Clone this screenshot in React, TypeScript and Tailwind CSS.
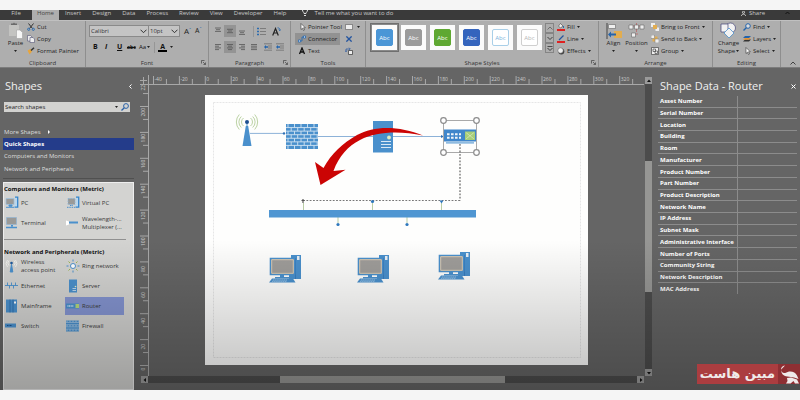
import React from "react";

const tabs = ["Insert", "Design", "Data", "Process", "Review", "View", "Developer", "Help"];

const fields = [
  "Asset Number", "Serial Number", "Location", "Building", "Room", "Manufacturer",
  "Product Number", "Part Number", "Product Description", "Network Name", "IP Address",
  "Subnet Mask", "Administrative Interface", "Number of Ports", "Community String",
  "Network Description", "MAC Address",
];

const styles = [
  "bg-[#4b96d6] border-[#4b96d6] text-white",
  "bg-[#9b9b9b] border-[#9b9b9b] text-white",
  "bg-[#5fa832] border-[#5fa832] text-white",
  "bg-[#3464bd] border-[#3464bd] text-white",
  "bg-white border-[#a9cfe8] text-[#79b2dc]",
  "bg-white border-[#cfcfcf] text-[#b5b5b5]",
];

function Caret() {
  return (
    <svg className="h-[2px] w-[3px] shrink-0" viewBox="0 0 3 2">
      <path d="M0 0h3L1.500 2z" fill="#222" />
    </svg>
  );
}

function Group({ label, className, launcher, children }: {
  label: string; className: string; launcher?: boolean; children: React.ReactNode;
}) {
  return (
    <section aria-label={label} className={"flex flex-col border-r border-[#8e8e8e] " + className}>
      <div className="flex h-[38px]">{children}</div>
      <div className="relative text-center text-[6px] leading-[8px] text-[#333]">
        {label}
        {launcher && (
          <svg className="absolute right-[2px] top-[1px] size-[5px]" viewBox="0 0 5 5" fill="none" stroke="#444" strokeWidth=".7">
            <path d="M.5 3.500v-3h3M2 2l2.300 2.300M4.500 2.500v2h-2" />
          </svg>
        )}
      </div>
    </section>
  );
}

function Tool({ icon, label, caret, active }: {
  icon: React.ReactNode; label: string; caret?: boolean; active?: boolean;
}) {
  return (
    <button className={"flex h-[12px] items-center gap-[2px] whitespace-nowrap pl-[3px] pr-[3px] text-[6px] leading-[12px] " + (active ? "bg-[#929292]" : "")}>
      <svg className="size-[8px] shrink-0" viewBox="0 0 8 8">{icon}</svg>
      {label}
      {caret && <Caret />}
    </button>
  );
}

function Combo({ label, value, className }: { label: string; value: string; className: string }) {
  return (
    <div className={"relative h-[12px] border border-[#8a8a8a] bg-[#c4c4c4] " + className}>
      <select aria-label={label} className="block h-[10px] w-full appearance-none bg-transparent pl-[1px] text-[6px] leading-[10px] text-[#333]">
        <option>{value}</option>
      </select>
      <svg className="pointer-events-none absolute right-[1px] top-[3px] h-[5px] w-[7px]" viewBox="0 0 7 5" fill="none" stroke="#333">
        <path d="M.5 .7l3 3 3-3" />
      </svg>
    </div>
  );
}

function Lines({ widths, align, active, label, top = 1.5 }: {
  widths: number[]; align: "l" | "c" | "r"; active?: boolean; label: string; top?: number;
}) {
  return (
    <button aria-label={label} className={"flex h-[12px] w-[12px] items-center justify-center " + (active ? "bg-[#949494]" : "")}>
      <svg className="size-[8px]" viewBox="0 0 8 8" stroke="#555" strokeWidth=".8">
        {widths.map((w, i) => {
          const x = align === "l" ? 1 : align === "r" ? 7 - w : 4 - w / 2;
          return <path key={i} d={`M${x} ${top + i * 1.7}h${w}`} />;
        })}
      </svg>
    </button>
  );
}

function Ribbon() {
  return (
    <div className="flex h-[48px] border-b border-[#7c7c7c] border-t border-t-[#c0c0c0] bg-[#aeaeae] text-[#222]">
      <Group label="Clipboard" className="w-[86px]">
        <button className="ml-[7px] flex w-[17px] flex-col items-center text-[6px] leading-[8px]">
          <svg className="mt-[1px] h-[17px] w-[15px]" viewBox="0 0 15 17">
            <path d="M1 3h10v11H1z" fill="#c3c3c1" />
            <path d="M3 3V1.500h2L6 .5l1 1h2V3z" fill="#6a6a6a" />
            <path d="M8.500 8h3.500l2.500 2.500v6h-6z" fill="#f6f6f6" stroke="#999" strokeWidth=".5" />
          </svg>
          Paste
          <span className="mt-[3px] flex"><Caret /></span>
        </button>
        <div className="flex flex-col">
          <Tool label="Cut" icon={<g fill="none" stroke="#333"><path d="M1.500 .5l4 5M6.500 .5l-4 5" /><circle cx="1.700" cy="6.300" r="1.100" stroke="#2c6cb0" /><circle cx="6.300" cy="6.300" r="1.100" stroke="#2c6cb0" /></g>} />
          <Tool label="Copy" icon={<g fill="#eee" stroke="#557" strokeWidth=".6"><path d="M.5 .5h3l1.500 1.500v4h-4.500z" /><path d="M3 2.500h3l1.500 1.500v3.500H3z" /></g>} />
          <Tool label="Format Painter" icon={<><path d="M.5 3.500l3-1.500 1.500 2.500-2.500 3z" fill="#e9a63c" /><path d="M4 3.500L7 .7" stroke="#333" strokeWidth="1.500" /></>} />
        </div>
      </Group>

      <Group label="Font" className="w-[123px]" launcher>
        <div className="flex flex-col pl-[3px] pt-[4px]">
          <div className="flex items-center">
            <Combo label="Font name" value="Calibri" className="w-[60px]" />
            <Combo label="Font size" value="10pt" className="w-[31px] border-l-0" />
            <button aria-label="Grow font" className="ml-[4px] text-[8px] leading-[10px]">A<sup className="text-[5px] text-[#2c6cb0]">ˆ</sup></button>
            <button aria-label="Shrink font" className="ml-[4px] text-[7px] leading-[10px]">A<sup className="text-[5px] text-[#2c6cb0]">ˇ</sup></button>
          </div>
          <div className="mt-[4px] flex h-[12px] items-center pl-[4px] text-[7px] leading-[12px] text-[#111]">
            <button className="w-[12px] text-left font-bold">B</button>
            <button className="w-[12px] text-left font-bold italic">I</button>
            <button className="w-[10px] text-left font-bold underline">U</button>
            <button className="w-[12px] text-left text-[5px] font-bold line-through">abc</button>
            <button className="flex items-center gap-[1px] text-[6px]">Aa<Caret /></button>
            <span className="ml-[4px] h-[11px] border-l border-[#969696]" />
            <button className="ml-[3px] flex items-center gap-[3px]">
              <span className="h-[9px] w-[9px] border-b-2 border-black text-center font-bold leading-[7px]">A</span>
              <Caret />
            </button>
          </div>
        </div>
      </Group>

      <Group label="Paragraph" className="w-[82px]" launcher>
        <div className="flex flex-col gap-[4px] pl-[3px] pt-[4px]">
          <div className="flex items-center">
            <Lines label="Align top" widths={[6, 4, 6]} align="c" top={1} />
            <Lines label="Align middle" widths={[6, 4, 6]} align="c" top={2.3} active />
            <Lines label="Align bottom" widths={[6, 4, 6]} align="c" top={4} />
            <span className="ml-[5px] h-[11px] border-l border-[#969696]" />
            <button aria-label="Bullets" className="ml-[3px]">
              <svg className="size-[9px]" viewBox="0 0 9 9"><path d="M0 1.500h2M0 4.500h2M0 7.500h2" stroke="#2c6cb0" strokeWidth="1.500" /><path d="M3 1.500h6M3 4.500h6M3 7.500h6" stroke="#666" strokeWidth=".7" /></svg>
            </button>
            <button aria-label="Rotate text" className="ml-[6px]">
              <svg className="size-[9px]" viewBox="0 0 9 9" fill="none"><path d="M.7 8.500L3.500 1.500l2.800 7M1.800 6h3.400" stroke="#222" strokeWidth="1.200" /><path d="M5.500 .8c2 0 2.500 1 2.300 2.700M6.600 2.500l1.200 1.200L8.800 2.500" stroke="#2c6cb0" strokeWidth=".9" /></svg>
            </button>
          </div>
          <div className="flex items-center">
            <Lines label="Align left" widths={[6, 4, 6, 4]} align="l" />
            <Lines label="Center" widths={[6, 4, 6, 4]} align="c" active />
            <Lines label="Align right" widths={[6, 4, 6, 4]} align="r" />
            <Lines label="Justify" widths={[6, 6, 6, 6]} align="l" />
            {["Decrease indent", "Increase indent"].map((n) => (
              <button key={n} aria-label={n} className="ml-[4px]">
                <svg className="size-[8px]" viewBox="0 0 8 8"><path d="M0 .8h8M4 3h4M4 5h4M0 7.200h8" stroke="#666" strokeWidth=".7" /><path d="M0 4l2-2v1.300h2v1.400H2V6z" fill="#2464ac" /></svg>
              </button>
            ))}
          </div>
        </div>
      </Group>

      <Group label="Tools" className="w-[75px]">
        <div className="flex flex-col items-start pl-[4px]">
          <Tool label="Pointer Tool" icon={<path d="M3 .5v6l1.500-1.300 1 2.300 1-.5-1-2.200h1.800z" fill="#fff" stroke="#333" strokeWidth=".6" />} />
          <Tool active label="Connector" icon={<g fill="none" stroke="#2c6cb0" strokeWidth=".9"><path d="M1.500 6h2.500V2h2.500" /><path d="M.4 5h2v2h-2zM5.500 1h2v2h-2z" fill="#fff" /></g>} />
          <Tool label="Text" icon={<path d="M1.500 7L4 1l2.500 6M2.500 5h3" fill="none" stroke="#111" strokeWidth="1.300" />} />
        </div>
        <div className="flex flex-col">
          <button aria-label="Rectangle" className="flex h-[12px] items-center gap-[4px]"><span className="h-[6px] w-[8px] border border-[#888] bg-[#eee]" /><Caret /></button>
          <button aria-label="Connection point" className="flex h-[12px] items-center pl-[1px]"><svg className="size-[6px]" viewBox="0 0 5 5"><path d="M.3 .3l4.400 4.400M4.700 .3L.3 4.700" stroke="#2455a0" strokeWidth="1.100" /></svg></button>
          <button aria-label="Text block" className="flex h-[12px] items-center"><svg className="size-[8px]" viewBox="0 0 8 8" fill="none" stroke="#333" strokeWidth=".7"><path d="M3.500 3.500h4v4h-4z" fill="#eee" /><path d="M1 4.500V2h4M4 .7L5.300 2 4 3.200M0 3.500l1 1.300 1-1.300" stroke="#2455a0" /></svg></button>
        </div>
      </Group>

      <Group label="Shape Styles" className="min-w-[232px] flex-1" launcher>
        <div className="flex pl-[4px] pt-[2px]">
          <div className="flex h-[29px] items-center">
            {styles.map((s, i) => (
              <button key={i} className={"flex h-[29px] w-[29px] items-center justify-center border " + (i === 0 ? "border-[#6f6f6f] bg-[#8a8a8a]" : "border-transparent")}>
                <span className="flex h-[25px] w-[25px] items-center justify-center bg-[#fbfbfb]">
                  <span className={"flex h-[17px] w-[17px] items-center justify-center rounded-[2px] border text-[6px] leading-[6px] " + s}>Abc</span>
                </span>
              </button>
            ))}
          </div>
          <div className="ml-[1px] flex flex-col">
            {["Previous styles", "Next styles", "More styles"].map((n, i) => (
              <button key={n} aria-label={n} className="flex h-[10px] w-[9px] items-center justify-center border border-[#858585]">
                <svg className="h-[5px] w-[6px]" viewBox="0 0 6 5" fill="none" stroke={i === 0 ? "#666" : "#333"} strokeWidth=".9">
                  <path d={i === 0 ? "M.5 3.500L3 1l2.500 2.500" : i === 1 ? "M.5 1L3 3.500 5.500 1" : "M.5 2L3 4.500 5.500 2M.5 .4h5"} />
                </svg>
              </button>
            ))}
          </div>
        </div>
        <div className="flex flex-col">
          <Tool caret label="Fill" icon={<><path d="M1.500 3l2-2.500 2.500 2.500-2.500 2z" fill="#eee" stroke="#444" strokeWidth=".6" /><path d="M6.500 3v2" stroke="#2c6cb0" /><path d="M0 7h8" stroke="#e02020" strokeWidth="2" /></>} />
          <Tool caret label="Line" icon={<><path d="M2 5L6.500 .5" stroke="#2455a0" strokeWidth="1.200" /><path d="M0 7h8" stroke="#e02020" strokeWidth="2" /></>} />
          <Tool caret label="Effects" icon={<><circle cx="4.300" cy="4.500" r="3" fill="#444" /><circle cx="3.500" cy="3.500" r="2.700" fill="#eee" stroke="#555" strokeWidth=".5" /></>} />
        </div>
      </Group>

      <Group label="Arrange" className="w-[114px]">
        <button className="ml-[6px] flex w-[17px] flex-col items-center text-[6px] leading-[8px]">
          <svg className="mt-[1px] h-[17px] w-[16px]" viewBox="0 0 16 17">
            <path d="M1 1v16" stroke="#444" /><path d="M2.500 2.500h7v4h-7z" fill="#eee" stroke="#666" strokeWidth=".6" />
            <path d="M8 9h8v7H8z" fill="#e2ad50" /><path d="M2 12.500l3-3v2h5v2H5v2z" fill="#2464ac" />
          </svg>
          Align
          <span className="mt-[3px] flex"><Caret /></span>
        </button>
        <button className="ml-[3px] flex w-[23px] flex-col items-center text-[6px] leading-[8px]">
          <svg className="mt-[1px] h-[17px] w-[17px]" viewBox="0 0 17 17" fill="#eee" stroke="#666" strokeWidth=".6">
            <path d="M8.500 1v9M5 4h7M5 12h5" stroke="#c05050" /><path d="M1 3h4v4H1zM6.500 3h4v4h-4zM12 3h4v4h-4zM3.500 11h4v4h-4z" />
          </svg>
          Position
          <span className="mt-[3px] flex"><Caret /></span>
        </button>
        <div className="flex flex-col items-start">
          <Tool caret label="Bring to Front" icon={<><path d="M0 0h4v4H0zM4.500 4.500H8V8H4.500z" fill="#eee" /><path d="M2 2h4v4H2z" fill="#e2ad50" /></>} />
          <Tool caret label="Send to Back" icon={<><path d="M1.500 1.500h5v5h-5z" fill="#e2ad50" /><path d="M0 0h3.500v3.500H0zM4 4h4v4H4z" fill="#eee" stroke="#777" strokeWidth=".5" /></>} />
          <Tool caret label="Group" icon={<g fill="#eee" stroke="#333" strokeWidth=".6"><path d="M.5 .5h7v7h-7z" /><path d="M2 2h2.500v2.500H2zM4 4h2.500v2.500H4z" /></g>} />
        </div>
      </Group>

      <Group label="Editing" className="w-[68px]">
        <button className="ml-[4px] flex w-[23px] flex-col items-center text-[6px] leading-[8px]">
          <svg className="mt-[1px] h-[17px] w-[17px] shrink-0" viewBox="0 0 17 17" fill="#f2f2f2" stroke="#447" strokeWidth=".7">
            <circle cx="10.500" cy="6" r="5" /><path d="M1 2h7v8H1z" /><path d="M9 6l5 5-5 5-5-5z" stroke="#3b86c8" />
          </svg>
          <span>Change</span>
          <span className="flex items-center gap-[1px]">Shape<Caret /></span>
        </button>
        <div className="flex flex-col items-start">
          <Tool caret label="Find" icon={<g fill="none" stroke="#2464ac"><circle cx="5" cy="3" r="2.300" fill="#ddd" /><path d="M3.300 4.700L.5 7.500" strokeWidth="1.400" /></g>} />
          <Tool caret label="Layers" icon={<><path d="M0 6.500l2-2h6l-2 2z" fill="#333" /><path d="M0 4.700l2-2h6l-2 2z" fill="#e2963c" /><path d="M0 3l2-2h6L6 3z" fill="#2464ac" /></>} />
          <Tool caret label="Select" icon={<path d="M3 .5v6l1.500-1.300 1 2.300 1-.5-1-2.200h1.800z" fill="#fff" stroke="#333" strokeWidth=".6" />} />
        </div>
      </Group>
      <button aria-label="Collapse ribbon" className="flex w-[19px] items-end justify-center pb-[2px] pl-[5px]">
        <svg className="h-[4px] w-[6px]" viewBox="0 0 6 4" fill="none" stroke="#333" strokeWidth=".9"><path d="M.5 3.500L3 1l2.500 2.500" /></svg>
      </button>
    </div>
  );
}

const blue = "#4a90cc";

const icons: Record<string, React.ReactNode> = {
  pc: <><path d="M10 .7h2.700v10H9.500" fill="#b9d7ee" stroke="#3585cc" strokeWidth="1.300" /><path d="M1 2h8v6H1z" fill="#9a9a98" stroke="#9cc3e2" strokeWidth=".7" /><path d="M4 8.500h3v1.200H4zM1 10.800h8" fill={blue} stroke={blue} strokeWidth="1" /></>,
  vpc: <><path d="M10 .7h2.700v10H9.500" fill="#b9d7ee" stroke="#3585cc" strokeWidth="1.300" /><path d="M2 2h7v6H2z" fill="#9a9a98" stroke="#8ab4d8" strokeWidth=".8" strokeDasharray="1.500 1" /><path d="M4 9h3M1 10.800h8" stroke={blue} strokeDasharray="1.500 .8" /></>,
  terminal: <><path d="M1.500 1h10v7h-10z" fill="#9a9a98" stroke="#8ab4d8" strokeWidth=".6" /><path d="M6 8.500h2V10H6zM1 10.200h11v1.500H1z" fill={blue} /></>,
  mux: <><path d="M0 4l3 1v3L0 9z" fill="#fff" /><path d="M3 6h9" stroke={blue} strokeWidth="2" /></>,
  wireless: <><path d="M5.200 12.500L6.500 5l1.300 7.500z" fill={blue} stroke={blue} /><circle cx="6.500" cy="3.500" r="1.300" fill="#1f5a9c" /><path d="M4 6a3.500 3.500 0 010-5M9 6a3.500 3.500 0 000-5M2.500 7.500a5.500 5.500 0 010-7M10.500 7.500a5.500 5.500 0 000-7" fill="none" stroke="#f3f3ee" strokeWidth=".9" /></>,
  ring: <><circle cx="7" cy="6.500" r="2.500" fill="#fff" stroke={blue} /><path d="M7 0v2M7 11v2M.5 6.500h2M11.500 6.500h2" stroke={blue} /><path d="M2.500 2l1.500 1.500M11.500 2L10 3.500M2.500 11L4 9.500M11.500 11L10 9.500" stroke="#9db850" /></>,
  ethernet: <path d="M0 6h13M2.500 3v3M6.500 3v3M10.500 3v3M4.500 6v3M8.500 6v3" stroke={blue} strokeWidth=".9" />,
  server: <><path d="M3 0h8v13H3z" fill={blue} /><path d="M6.500 9h3.500M6.500 11h3.500" stroke="#dbe8f4" strokeWidth=".8" /><circle cx="9.500" cy="7" r=".8" fill="#e6f0c0" /></>,
  mainframe: <><path d="M1 0h11v13H1z" fill={blue} /><path d="M5 0v13M8 0v13" stroke="#2765a0" strokeWidth=".7" /><path d="M9 2h2v2H9z" fill="#fff" /></>,
  router: <><path d="M0 4h9v5H0zM9 4h4v5H9z" fill={blue} /><path d="M1.500 6.500h6" stroke="#dce9f6" strokeWidth="1.500" strokeDasharray="1 .6" /><path d="M9.500 4.500H13v4H9.500z" fill="#b5d77c" /></>,
  switch: <><path d="M0 4h11v4H0z" fill={blue} /><path d="M2 6h5" stroke="#1c4f8a" strokeWidth="1.200" strokeDasharray="1 .5" /></>,
  firewall: <><path d="M0 1h13v11H0z" fill={blue} /><path d="M0 3h13M0 5.200h13M0 7.400h13M0 9.600h13" stroke="#b9d2e8" strokeWidth=".6" /><path d="M1 1v11M4 1v11M7 1v11M10 1v11M13 1v11" stroke="#b9d2e8" strokeWidth=".8" strokeDasharray="1.600 2.800" /></>,
};

function Stencil({ icon, children, active }: { icon: string; children: React.ReactNode; active?: boolean }) {
  return (
    <button className={"flex h-[18px] items-center gap-[2px] whitespace-nowrap px-[1px] text-left text-[6px] leading-[8px] " + (active ? "bg-[#8494d0]" : "")}>
      <svg className="size-[14px] shrink-0" viewBox="0 0 14 13">{icons[icon]}</svg>
      <span>{children}</span>
    </button>
  );
}

function ShapesPanel() {
  return (
    <aside className="flex w-[136px] shrink-0 flex-col pl-[3px] pr-[2px]">
      <header className="flex items-center justify-between pl-[2px] pr-[2px] pt-[10px]">
        <h2 className="text-[11px] leading-[16px] text-[#f0f0f0]">Shapes</h2>
        <button aria-label="Collapse shapes" className="text-white">
          <svg className="h-[5px] w-[3px]" viewBox="0 0 3 5"><path d="M2.500 .5l-2 2 2 2" fill="none" stroke="#fff" /></svg>
        </button>
      </header>
      <label className="ml-[1px] mr-[4px] mt-[8px] flex h-[10px] items-center gap-[3px] bg-[#d2d2d0] pr-[1px]">
        <input aria-label="Search shapes" placeholder="Search shapes" className="min-w-0 flex-1 bg-transparent pl-[1px] text-[6px] leading-[10px] outline-none placeholder:text-[#222]" />
        <Caret />
        <svg className="size-[8px]" viewBox="0 0 8 8" fill="none" stroke="#2b62a8"><circle cx="5" cy="3" r="2.400" /><path d="M3.300 4.700L.5 7.500" strokeWidth="1.300" /></svg>
      </label>
      <nav className="mt-[14px] flex flex-col text-[6px] text-[#dedede]">
        <a href="#more" className="flex h-[12px] items-center gap-[7px] pl-[1px]">More Shapes
          <svg className="h-[4px] w-[2px]" viewBox="0 0 2 4"><path d="M0 0l2 2-2 2z" fill="#fff" /></svg>
        </a>
        <a href="#quick" className="flex h-[12px] items-center bg-[#243c8a] pl-[1px] font-bold text-white">Quick Shapes</a>
        <a href="#computers" className="flex h-[13px] items-center pl-[1px]">Computers and Monitors</a>
        <a href="#network" className="flex h-[12px] items-center pl-[1px]">Network and Peripherals</a>
      </nav>
      <div className="mt-[3px] border-t border-[#505050]" />
      <div className="mt-[3px] flex-1 border border-[#eee] bg-[#d3d3d1] text-[#3a3a3a]">
        <h3 className="pt-[1px] text-[6px] font-bold leading-[10px] text-[#111]">Computers and Monitors (Metric)</h3>
        <div className="mr-[8px] grid grid-cols-[61px_59px] gap-y-[2px]">
          <Stencil icon="pc">PC</Stencil>
          <Stencil icon="vpc">Virtual PC</Stencil>
          <Stencil icon="terminal">Terminal</Stencil>
          <Stencil icon="mux">Wavelength-...<br />Multiplexer (...</Stencil>
        </div>
        <div className="mr-[7px] mt-[7px] border-t border-[#909090]" />
        <h3 className="pt-[7px] text-[6px] font-bold leading-[10px] text-[#111]">Network and Peripherals (Metric)</h3>
        <div className="mr-[8px] grid grid-cols-[61px_59px] gap-y-[2px]">
          <Stencil icon="wireless">Wireless<br />access point</Stencil>
          <Stencil icon="ring">Ring network</Stencil>
          <Stencil icon="ethernet">Ethernet</Stencil>
          <Stencil icon="server">Server</Stencil>
          <Stencil icon="mainframe">Mainframe</Stencil>
          <Stencil icon="router" active>Router</Stencil>
          <Stencil icon="switch">Switch</Stencil>
          <Stencil icon="firewall">Firewall</Stencil>
        </div>
      </div>
    </aside>
  );
}

const STEP = 25.9;

function TopRuler() {
  return (
    <svg className="block h-[10px] w-full" fill="#ccc" stroke="none">
      <path d="M0 9.500h2000" stroke="#a8a8a8" />
      {Array.from({ length: 19 }, (_, i) => {
        const x = 4.500 + i * STEP;
        return (
          <g key={i}>
            <path d={`M${x} 1v8M${x + STEP / 2} 4v5`} stroke="#a8a8a8" />
            <text x={x + 1} y="6" fontSize="5">{(i - 2) * 20}</text>
          </g>
        );
      })}
    </svg>
  );
}

function SideRuler() {
  return (
    <svg className="block h-full w-[10px]" fill="#ccc">
      <path d="M9.500 0v2000" stroke="#a8a8a8" />
      {Array.from({ length: 12 }, (_, i) => {
        const y = 280.500 - i * STEP;
        return (
          <g key={i}>
            <path d={`M1 ${y}h8M4 ${y + STEP / 2 - STEP}h5`} stroke="#a8a8a8" />
            <text transform={`translate(6 ${i === 0 ? y + 5 : y + 10}) rotate(-90)`} fontSize="5">{i * 20}</text>
          </g>
        );
      })}
    </svg>
  );
}

function Workstation({ x, y }: { x: number; y: number }) {
  return (
    <g transform={`translate(${x} ${y})`}>
      <path d="M22 0h10v24H20V3h2z" fill={blue} />
      <path d="M26.500 3v21" stroke="#2f73b4" strokeWidth=".7" />
      <path d="M28 1h2.500v4H28z" fill="#e8eef4" />
      <path d="M1.500 3.500h24v16h-24z" fill="#9f9d9a" stroke={blue} strokeWidth="1.600" />
      <path d="M2.700 4.700h21.600v13.600H2.700z" fill="none" stroke="#d8cbb5" />
      <path d="M11 20h4v2h-4zM6 22h14v1.500H6z" fill={blue} />
      <path d="M3 23.500h21l2.500 4H0z" fill={blue} />
      <path d="M4 25h14M3 26.300h15" stroke="#c8dff2" strokeWidth=".6" strokeDasharray="1.500 .6" />
    </g>
  );
}

function Diagram() {
  const rows = [0, 1, 2, 3, 4, 5, 6];
  return (
    <svg className="block w-full" viewBox="205 95 383 270" fill="none">
      <rect x="213.500" y="102.500" width="367" height="255" stroke="#e6e6e6" strokeDasharray="2 1" />
      <path d="M245.800 126h2.400l3.300 20h-9z" fill={blue} />
      <path d="M247 122v5" stroke={blue} />
      <circle cx="247" cy="122" r="2" fill="#1d4f8f" />
      <path d="M243.500 126a5 5 0 010-8M250.500 126a5 5 0 000-8M241.300 127.500a7.500 7.500 0 010-11M252.700 127.500a7.500 7.500 0 000-11M239.300 129.500a11 11 0 010-15M254.700 129.500a11 11 0 000-15" stroke="#bcd3a4" />
      <path d="M250 133.400h35M318 136.500h55M393 136.500h51" stroke="#8db2d8" />
      <circle cx="284" cy="133.400" r="1.200" fill="#2f6fb4" />
      <path d="M441 135l3 1.500-3 1.500z" fill="#2f6fb4" />
      <rect x="286" y="124" width="32" height="25" fill={blue} />
      {rows.map((r) => (
        <g key={r} stroke="#d3e4f3" strokeWidth=".9">
          {r > 0 && <path d={`M286 ${124 + r * 3.57}h32`} />}
          {[0, 1, 2, 3, 4].map((c) => {
            const x = 288 + c * 6.500 + (r % 2 ? 3.200 : 0);
            return x < 318 ? <path key={c} d={`M${x} ${124 + r * 3.57}v3.500`} /> : null;
          })}
        </g>
      ))}
      <rect x="373" y="121" width="20" height="31.500" fill={blue} />
      <circle cx="389" cy="137.500" r="1.900" fill="#e3ecc0" />
      <path d="M381 141.500h10M381 144.500h10M381 147.500h10" stroke="#d8e8f6" />
      <path d="M423 135.500C400 126 375 125 357 135C343 143 331 154 323.500 168L315 162L320.500 185L345.500 169.700L333.500 171C339 156 348 146 360 140C378 131 400 131 423 135.500Z" fill="#cb0404" />
      <path d="M443.500 120.500h33v32h-33z" stroke="#a9a9a9" />
      <rect x="444" y="129.500" width="32" height="12" fill="#3f86cb" />
      <path d="M446 142.800h28" stroke="#8fbbe0" strokeWidth="1.800" />
      <path d="M447 134.300h14M447 137.800h14" stroke="#f0f5fa" strokeWidth="2" strokeDasharray="2.600 1.400" />
      <rect x="465" y="131.500" width="10" height="8.500" fill="#a8ce78" />
      <path d="M466.500 133l7 5.500M473.500 133l-7 5.500" stroke="#e7f0cf" strokeDasharray="1.500 1" />
      <g fill="#fff" stroke="#8c8c8c" strokeWidth="1.200">
        <circle cx="443.500" cy="120.500" r="2.800" /><circle cx="476.500" cy="120.500" r="2.800" />
        <circle cx="443.500" cy="152.500" r="2.800" /><circle cx="476.500" cy="152.500" r="2.800" />
      </g>
      <path d="M303.500 203v7M372.500 203v7M441.500 203v7M338 217v6M407 217v6" stroke="#b9cda4" />
      <path d="M460 144V200.500" stroke="#707070" strokeWidth="1.300" strokeDasharray="1.800 1.500" />
      <path d="M460 200.500H303" stroke="#777" strokeWidth="1.100" strokeDasharray="1.800 1.500" />
      <path d="M301.500 200.500h3M303 199v4" stroke="#555" strokeWidth="1.200" />
      <g fill="#2f78bd">
        <circle cx="372.500" cy="201.500" r="1.600" /><circle cx="338" cy="224.500" r="1.600" /><circle cx="407" cy="224.500" r="1.600" />
        <path d="M439.500 200.500h4l-2 3z" />
      </g>
      <rect x="269" y="210" width="207" height="7.500" fill="#4f96d2" />
      <Workstation x={269} y={255} />
      <Workstation x={357} y={255} />
      <Workstation x={438} y={252} />
    </svg>
  );
}

function ScrollArrow({ d, label }: { d: string; label: string }) {
  return (
    <button aria-label={label} className="flex size-[7px] shrink-0 items-center justify-center bg-[#9a9a9a]">
      <svg className="size-[4px]" viewBox="0 0 4 4"><path d={d} fill="#111" /></svg>
    </button>
  );
}

function Workspace() {
  return (
    <main className="flex min-w-0 flex-1 pt-[7px]">
      <div className="flex min-w-0 flex-1 flex-col">
        <div className="flex">
          <svg className="h-[10px] w-[13px] shrink-0" stroke="#a8a8a8"><path d="M4 5.500h7M7.500 2v7M4 9.500h9M12.500 0v10" /></svg>
          <div className="min-w-0 flex-1 overflow-hidden"><TopRuler /></div>
        </div>
        <div className="flex flex-1">
          <div className="w-[13px] shrink-0 overflow-hidden pl-[3px]"><SideRuler /></div>
          <div className="flex-1 px-[56px] pt-[10px]">
            <div className="bg-[#fefefd]"><Diagram /></div>
          </div>
        </div>
        <div className="mb-[7px] ml-[5px] flex h-[7px] items-center">
          <ScrollArrow label="Scroll left" d="M3 0v4L.5 2z" />
          <div className="flex h-[7px] flex-1 bg-[#4c4c4c]">
            <div className="w-[27%]" />
            <div className="w-[46%] bg-[#969694]" />
          </div>
          <ScrollArrow label="Scroll right" d="M1 0v4l2.500-2z" />
        </div>
      </div>
      <div className="mb-[14px] ml-[1px] mr-[1px] mt-[2px] flex w-[7px] flex-col">
        <ScrollArrow label="Scroll up" d="M0 3h4L2 .5z" />
        <div className="flex flex-1 flex-col bg-[#4c4c4c]">
          <div className="h-[27%]" />
          <div className="h-[46%] bg-[#969694]" />
        </div>
        <ScrollArrow label="Scroll down" d="M0 1h4L2 3.500z" />
      </div>
    </main>
  );
}

function ShapeData() {
  return (
    <aside className="w-[147px] shrink-0 pl-[5px] pr-[3px]">
      <header className="flex items-center justify-between pl-[2px] pt-[10px]">
        <h2 className="text-[11px] leading-[16px] text-[#f0f0f0]">Shape Data - Router</h2>
        <button aria-label="Close" className="pr-[1px]">
          <svg className="size-[5px]" viewBox="0 0 5 5"><path d="M.5 .5l4 4M4.500 .5l-4 4" stroke="#fff" /></svg>
        </button>
      </header>
      <table className="mt-[2px] h-[198px] w-full border-collapse text-[6px] leading-[8px] text-white">
        <tbody>
          {fields.map((f) => (
            <tr key={f} className="border-b border-[#8c8c8c] last:border-b-0">
              <th scope="row" className="w-[79px] whitespace-nowrap border-r border-[#8c8c8c] p-0 pl-[2px] text-left font-bold">{f}</th>
              <td className="p-0" />
            </tr>
          ))}
        </tbody>
      </table>
    </aside>
  );
}

export default function App() {
  return (
    <div className="flex min-h-screen flex-col bg-[#f5f5f5] py-[10px] font-[family-name:'Open_Sans','Noto_Sans',sans-serif]">
      <div className="relative flex flex-1 flex-col overflow-hidden bg-[#656565]">
        <div className="flex h-[10px] items-start bg-[#3a3a3a] text-[6px] leading-[6px] text-[#c8c8c8]">
          <button className="w-[32px]">File</button>
          <button className="w-[27px] bg-[#aeaeae] pb-[4px] text-[#444]">Home</button>
          <div className="ml-[6px] flex gap-[11px]">
            {tabs.map((t) => <button key={t}>{t}</button>)}
          </div>
          <svg className="ml-[16px] h-[6px] w-[6px]" viewBox="0 0 6 6" fill="none" stroke="#ddd"><path d="M.5 0c0 2 1.500 2 1.500 3.500h2C4 2 5.500 2 5.500 0M2 5.500h2" /></svg>
          <button className="ml-[6px]">Tell me what you want to do</button>
          <div className="flex-1" />
          <button className="mr-[20px] flex items-center gap-[3px]">
            <svg className="size-[5px]" viewBox="0 0 6 6" fill="none" stroke="#ddd"><circle cx="3" cy="1.500" r="1.300" /><path d="M.5 6c0-3 5-3 5 0" /></svg>
            Share
          </button>
          <svg className="mr-[10px] mt-[1px] h-[4px] w-[5px]" viewBox="0 0 5 4" fill="none" stroke="#111"><path d="M.5 3l2-2 2 2" /></svg>
        </div>
        <Ribbon />
        <div className="flex flex-1">
          <ShapesPanel />
          <Workspace />
          <ShapeData />
        </div>
        <div className="pointer-events-none absolute inset-x-0 bottom-0 h-[150px] bg-linear-to-b from-transparent to-black/25" />
        <div className="absolute bottom-[6px] right-0 flex h-[20px] w-[103px] bg-[#ab3d40] text-[#f0eaea]">
          <a href="#host" dir="rtl" lang="fa" className="flex-1 text-center font-[family-name:'DejaVu_Sans',sans-serif] text-[13px] font-bold leading-[20px]">مبین هاست</a>
          <svg className="h-[20px] w-[22px] bg-[#8e2f33]" viewBox="0 0 22 20">
            <path d="M7 1.500C3.500 2 2 5 4 8C6 10.500 8.500 8 11 7.500C14.500 7 17.500 8.500 19 11.500L20.500 15L16 13.500L9.500 12.500C5 12 2.800 9 3.200 5.500" fill="#efe9e9" />
            <path d="M9 14l4-.5 6 2 2 4h-4l-1.500-2.500-3 2.500H8l1.500-2.500z" fill="#efe9e9" />
          </svg>
        </div>
      </div>
    </div>
  );
}
